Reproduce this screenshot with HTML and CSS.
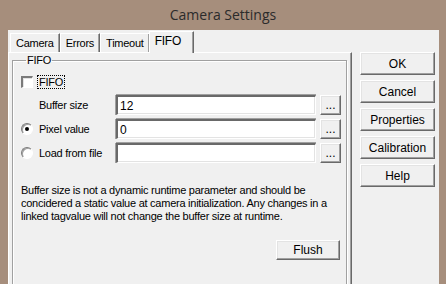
FILE: index.html
```html
<!DOCTYPE html>
<html lang="en">
<head>
  <meta charset="UTF-8" />
  <title>Camera Settings</title>
  <link rel="stylesheet" href="styles.css">
</head>
<body>

  <div class="window">
    <div class="titlebar">Camera Settings</div>

    <div class="client">
      <div class="tabs-area">
        <ul class="tabs">
          <li class="tab">Camera</li>
          <li class="tab">Errors</li>
          <li class="tab">Timeout</li>
          <li class="tab active">FIFO</li>
        </ul>

        <div class="panel">
          <fieldset class="group">
            <legend>FIFO</legend>

            <div class="check-row">
              <span class="checkbox"></span>
              <span class="focus">FIFO</span>
            </div>

            <div class="fields">
              <span></span>
              <span>Buffer size</span>
              <input type="text" class="edit" value="12" />
              <button class="btn dots">...</button>

              <span class="radio checked"></span>
              <span>Pixel value</span>
              <input type="text" class="edit" value="0" />
              <button class="btn dots">...</button>

              <span class="radio"></span>
              <span>Load from file</span>
              <input type="text" class="edit" value="" />
              <button class="btn dots">...</button>
            </div>

            <p class="note">
              Buffer size is not a dynamic runtime parameter and should be<br>
              concidered a static value at camera initialization. Any changes in a<br>
              linked tagvalue will not change the buffer size at runtime.
            </p>

            <div class="flush-row">
              <button class="btn flush">Flush</button>
            </div>
          </fieldset>
        </div>
      </div>

      <div class="side">
        <button class="btn side-btn">OK</button>
        <button class="btn side-btn">Cancel</button>
        <button class="btn side-btn">Properties</button>
        <button class="btn side-btn">Calibration</button>
        <button class="btn side-btn">Help</button>
      </div>
    </div>
  </div>

</body>
</html>
```

FILE: styles.css
```css
body { margin: 0; background: #a68e7c; font-family: "Liberation Sans", Arial, sans-serif; font-size: 11px; letter-spacing: -0.25px; color: #000; }

.window { width: 446px; height: 284px; overflow: hidden; }

.titlebar {
  height: 30px;
  line-height: 30px;
  text-align: center;
  font-family: "Open Sans", "Noto Sans", sans-serif;
  font-size: 14px;
  letter-spacing: 0;
  color: #2b2b2b;
}

.client {
  margin-left: 8px;
  width: 431px;
  height: 254px;
  background: #f0f0f0;
  display: flex;
  overflow: hidden;
}

.tabs-area { width: 344px; padding-top: 1px; }

.tabs {
  list-style: none;
  margin: 0;
  padding: 0 0 0 2px;
  display: flex;
  align-items: flex-end;
  height: 21px;
  position: relative;
  z-index: 1;
}
.tab {
  height: 18px;
  line-height: 18px;
  padding: 0 5px;
  border-top: 1px solid #fff;
  border-left: 1px solid #fff;
  border-right: 1px solid #696969;
  box-shadow: inset -1px 0 0 #a0a0a0;
  background: #f0f0f0;
}
.tab.active {
  height: 21px;
  line-height: 19px;
  margin-left: -1px;
  padding: 0 12px 0 5px;
  margin-bottom: -1px;
  font-size: 12px;
}

.panel {
  height: 240px;
  border-top: 1px solid #fff;
  border-left: 1px solid #fff;
  border-right: 1px solid #696969;
  box-shadow: inset -1px 0 0 #a0a0a0;
  padding: 1px 3px 0 3px;
}

.group {
  margin: 0;
  height: 240px;
  padding: 8px 0 0 8px;
  border: 1px solid #a0a0a0;
  box-shadow: 1px 1px 0 #fff, inset 1px 1px 0 #fff;
  width: 335px;
  box-sizing: border-box;
}
.group legend { padding: 0 1px; margin-left: 5px; line-height: 13px; }

.check-row { display: flex; align-items: center; gap: 4px; height: 13px; }
.checkbox {
  width: 9px;
  height: 9px;
  background: #fff;
  border-top: 2px solid #7a7a7a;
  border-left: 2px solid #7a7a7a;
  border-right: 1px solid #fff;
  border-bottom: 1px solid #fff;
  box-shadow: 1px 1px 0 #e3e3e3 inset;
}
.focus { outline: 1px dotted #000; padding: 0 1px; line-height: 12px; margin-left: 1px; }

.fields {
  display: grid;
  grid-template-columns: 18px 77px 204px 21px;
  grid-auto-rows: 20px;
  row-gap: 4px;
  align-items: center;
  margin-top: 7px;
}

.radio {
  width: 10px;
  height: 10px;
  border-radius: 50%;
  background: #fff;
  border: 1px solid;
  border-color: #7a7a7a #fff #fff #7a7a7a;
  box-shadow: inset 1px 1px 0 #a0a0a0;
  display: flex;
  align-items: center;
  justify-content: center;
}
.radio.checked::after {
  content: "";
  width: 4px;
  height: 4px;
  border-radius: 50%;
  background: #000;
}

.edit {
  width: 200px;
  height: 20px;
  box-sizing: border-box;
  padding: 0 2px;
  font: inherit;
  font-size: 12px;
  background: #fff;
  border-top: 2px solid #696969;
  border-left: 2px solid #696969;
  border-right: 1px solid #fff;
  border-bottom: 1px solid #fff;
  box-shadow: 0 -1px 0 #a0a0a0, -1px 0 0 #a0a0a0, inset -1px -1px 0 #e3e3e3;
  outline: none;
}

.btn {
  font: inherit;
  font-size: 12px;
  background: #f0f0f0;
  color: #000;
  border: 1px solid;
  border-color: #fff #696969 #696969 #fff;
  box-shadow: inset -1px -1px 0 #a0a0a0, inset 1px 1px 0 #e3e3e3;
  padding: 0;
  cursor: pointer;
}
.dots { width: 21px; height: 20px; line-height: 14px; }

.note { margin: 21px 0 0 0; line-height: 13px; }

.flush-row { display: flex; justify-content: flex-end; padding-right: 6px; margin-top: 17px; }
.flush { width: 64px; height: 20px; }

.side {
  display: flex;
  flex-direction: column;
  gap: 5px;
  padding: 22px 0 0 8px;
}
.side-btn { width: 75px; height: 23px; }
```
